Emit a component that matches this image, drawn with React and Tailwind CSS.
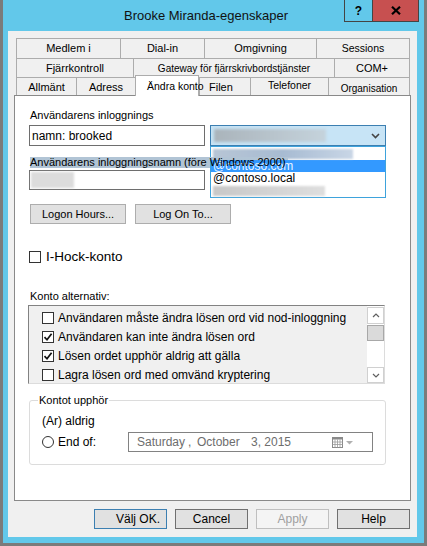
import React from "react";

const Check = () => (
  <svg width="10" height="10" viewBox="0 0 10 10">
    <path d="M1.5 5.2 L4 7.8 L8.6 1.8" fill="none" stroke="#111" strokeWidth="1.7" />
  </svg>
);

const Box = ({ checked }) => (
  <div className="w-[12px] h-[12px] border border-[#333] bg-white flex items-center justify-center shrink-0">
    {checked ? <Check /> : null}
  </div>
);

const Tab = ({ w, children, last, cls = "" }) => (
  <div
    className={`h-full border-t border-l ${last ? "border-r" : ""} border-[#acacac] bg-[#f0f0f0] flex items-center justify-center whitespace-nowrap overflow-hidden ${cls}`}
    style={{ width: w }}
  >
    {children}
  </div>
);

const Btn = ({ w, children, cls = "" }) => (
  <div
    className={`h-[20px] flex items-center justify-center border text-[12px] ${cls}`}
    style={{ width: w }}
  >
    {children}
  </div>
);

export default function App() {
  return (
    <div
      className="w-[427px] h-[546px] bg-[#7b7b7b] px-[3px] pb-[3px] flex flex-col text-black"
      style={{ fontFamily: '"Liberation Sans", Arial, sans-serif' }}
    >
      <div className="flex-1 bg-[#62c8ea] flex flex-col pl-[5px] pr-[7px] pb-[6px]">
        {/* Title bar */}
        <div className="h-[31px] relative flex items-center justify-center pr-[13px]">
          <span className="text-[13px] text-[#111]">Brooke Miranda-egenskaper</span>
          <div className="absolute top-0 -right-[2px] flex h-[22px]">
            <div className="w-[28px] h-full border-l border-b border-[#444] flex items-center justify-center text-[12px] font-bold">
              ?
            </div>
            <div className="w-[47px] h-full border-l border-r border-b border-[#444] bg-[#c75050] flex items-center justify-center">
              <svg width="10" height="9" viewBox="0 0 10 9">
                <path d="M1 0.8 L9 8.2 M9 0.8 L1 8.2" stroke="#000" strokeWidth="2.2" />
              </svg>
            </div>
          </div>
        </div>

        {/* Client */}
        <div className="flex-1 bg-[#f0f0f0] flex flex-col pt-[7px] pl-[6px]">
          {/* Tabs */}
          <div className="ml-[2px] flex flex-col text-[11px]">
            <div className="flex h-[20px]">
              <Tab w={104}>Medlem i</Tab>
              <Tab w={84}>Dial-in</Tab>
              <Tab w={112}>Omgivning</Tab>
              <Tab w={94} last cls="text-[10.5px]">Sessions</Tab>
            </div>
            <div className="flex h-[19px]">
              <Tab w={117}>Fjärrkontroll</Tab>
              <Tab w={201} cls="text-[10px]">Gateway för fjärrskrivbordstjänster</Tab>
              <Tab w={76} last>COM+</Tab>
            </div>
            <div className="flex h-[18px]">
              <Tab w={60} cls="pt-[2px]">Allmänt</Tab>
              <Tab w={59} cls="pt-[2px]">Adress</Tab>
              <div className="w-[64px] -mt-[2px] -mb-[1px] relative z-10 bg-white border-t border-l border-r border-[#acacac] flex items-center pl-[11px] whitespace-nowrap text-[10.5px] pt-[1px]">
                Ändra konto
              </div>
              <Tab w={51} cls="pt-[2px] justify-start pl-[9px]">Filen</Tab>
              <Tab w={78} cls="pb-[2px] text-[10.5px]">Telefoner</Tab>
              <Tab w={82} last cls="pt-[3px] text-[10px]">Organisation</Tab>
            </div>
          </div>

          {/* Panel */}
          <div className="w-[397px] h-[406px] bg-white border border-[#898989] flex flex-col pl-[14px]">
            <div className="mt-[13px] h-[13px] leading-[13px] text-[11px] ml-[1px]">Användarens inloggnings</div>
            <div className="mt-[3px] h-[21px] flex">
              <div className="w-[176px] h-full border border-[#6e6e6e] flex items-center pl-[2px] text-[12px]">
                namn: brooked
              </div>
              <div className="relative ml-[5px] w-[176px] h-full z-20">
                <div className="h-full border border-[#3c7fb1] bg-[#c7e4f6] flex items-center pl-[3px] pr-[5px]">
                  <div className="w-[112px] h-[13px] bg-gradient-to-r from-[#aab4bb] to-[#c5d3dc] blur-[1.5px]" />
                  <div className="flex-1" />
                  <svg width="9" height="6" viewBox="0 0 9 6">
                    <path d="M1 1 L4.5 4.5 L8 1" fill="none" stroke="#444" strokeWidth="1.6" />
                  </svg>
                </div>
                <div className="absolute top-full left-0 w-full h-[52px] bg-white border border-[#3ea3dc] flex flex-col text-[12px]">
                  <div className="h-[13px] flex items-center pl-[2px]">
                    <div className="w-[140px] h-[10px] bg-gradient-to-r from-[#b8c6d6] via-[#a7bbd2] to-[#c9d6e6] blur-[1.2px]" />
                  </div>
                  <div className="h-[12px] bg-[#3399ff] text-[#eaf4ff] leading-[13px] pl-[2px]">@contoso.com</div>
                  <div className="h-[13px] leading-[13px] pl-[2px]">@contoso.local</div>
                  <div className="h-[12px] flex items-center pl-[2px]">
                    <div className="w-[112px] h-[10px] bg-gradient-to-r from-[#c8c8c8] to-[#dedede] blur-[1.2px]" />
                  </div>
                </div>
              </div>
            </div>
            <div className="mt-[11px] h-[11px] flex ml-[1px] relative z-30">
              <span className="text-[11px] leading-[11px] pr-[2px] whitespace-nowrap [background:linear-gradient(#b1c4d5,#b1c4d5)_0_0/180px_100%_no-repeat,linear-gradient(#b1c4d5,#b1c4d5)_0_0/100%_3px_no-repeat]">
                Användarens inloggningsnamn (före Windows 2000)
              </span>
            </div>
            <div className="mt-[2px] h-[20px] w-[176px] border border-[#6e6e6e] flex items-center pl-[1px]">
              <div className="w-[43px] h-[16px] bg-[#dcdcdc] blur-[1px]" />
            </div>
            <div className="mt-[14px] flex">
              <Btn w={96} cls="ml-[1px] bg-[#e1e1e1] border-[#adadad] !text-[11px]">Logon Hours...</Btn>
              <Btn w={96} cls="ml-[9px] bg-[#e1e1e1] border-[#adadad] !text-[11px]">Log On To...</Btn>
            </div>
            <div className="mt-[25px] h-[16px] flex items-center">
              <Box />
              <span className="ml-[5px] text-[13.5px]">I-Hock-konto</span>
            </div>
            <div className="mt-[25px] h-[12px] leading-[12px] text-[11px] ml-[1px]">Konto alternativ:</div>
            <div className="mt-[3px] -ml-[1px] w-[357px] h-[79px] flex border-t border-l border-[#828282] border-r border-b border-r-[#dcdcdc] border-b-[#dcdcdc] bg-[#f0f0f0]">
              <div className="flex-1 flex flex-col pt-[2px] pl-[13px] overflow-hidden text-[12px]">
                {[
                  [false, "Användaren måste ändra lösen ord vid nod-inloggning"],
                  [true, "Användaren kan inte ändra lösen ord"],
                  [true, "Lösen ordet upphör aldrig att gälla"],
                  [false, "Lagra lösen ord med omvänd kryptering"],
                ].map(([c, t], i) => (
                  <div key={i} className="h-[19px] flex items-center shrink-0 whitespace-nowrap">
                    <Box checked={c} />
                    <span className="ml-[4px]">{t}</span>
                  </div>
                ))}
              </div>
              <div className="w-[17px] bg-white flex flex-col">
                <div className="mt-[1px] h-[17px] border border-[#d0d0d0] flex items-center justify-center">
                  <svg width="8" height="5" viewBox="0 0 8 5">
                    <path d="M1 4 L4 1 L7 4" fill="none" stroke="#606060" strokeWidth="1.2" />
                  </svg>
                </div>
                <div className="mt-[1px] h-[16px] bg-[#dadada] border border-[#a8a8a8]" />
                <div className="flex-1" />
                <div className="h-[16px] border border-[#d0d0d0] flex items-center justify-center">
                  <svg width="8" height="5" viewBox="0 0 8 5">
                    <path d="M1 1 L4 4 L7 1" fill="none" stroke="#606060" strokeWidth="1.2" />
                  </svg>
                </div>
              </div>
            </div>

            <div className="mt-[16px] w-[357px] h-[65px] border border-[#dcdcdc] rounded-[3px] relative flex flex-col pl-[12px] pt-[13px]">
              <span className="absolute -top-[7px] left-[8px] bg-white px-[1px] text-[11px] leading-[12px]">Kontot upphör</span>
              <div className="h-[14px] leading-[14px] text-[12px]">(Ar) aldrig</div>
              <div className="mt-[4px] h-[20px] flex items-center">
                <div className="w-[86px] flex items-center">
                  <div className="w-[12px] h-[12px] rounded-full border border-[#333] bg-white" />
                  <span className="ml-[4px] text-[12px]">End of:</span>
                </div>
                <div className="w-[245px] h-[20px] border border-[#828282] flex items-center pl-[8px] text-[12px] text-[#6d6d6d] whitespace-nowrap">
                  <span className="w-[51px]">Saturday</span>
                  <span className="w-[9px]">,</span>
                  <span className="w-[54px]">October</span>
                  <span className="w-[81px]">3, 2015</span>
                  <svg width="11" height="11" viewBox="0 0 11 11">
                    <rect x="0.5" y="0.5" width="10" height="10" fill="#fff" stroke="#8a8a8a" />
                    <rect x="0.5" y="0.5" width="10" height="2" fill="#8a8a8a" />
                    <path d="M0.5 5 H10.5 M0.5 7.5 H10.5 M3 2.5 V10.5 M5.5 2.5 V10.5 M8 2.5 V10.5" stroke="#9a9a9a" strokeWidth="0.8" />
                  </svg>
                  <svg width="9" height="5" viewBox="0 0 9 5" className="ml-[2px]">
                    <path d="M1 1 L8 1 L4.5 4.5 Z" fill="#b0b0b0" />
                  </svg>
                </div>
              </div>
            </div>
          </div>

          {/* Bottom buttons */}
          <div className="mt-[8px] flex justify-end pr-[7px] gap-[8px]">
            <Btn w={73} cls="bg-[#e1e1e1] border-[#3c7fb1] justify-end pr-[6px]">Välj OK.</Btn>
            <Btn w={73} cls="bg-[#e1e1e1] border-[#707070]">Cancel</Btn>
            <Btn w={73} cls="bg-[#f4f4f4] border-[#bfbfbf] text-[#a0a0a0]">Apply</Btn>
            <Btn w={73} cls="bg-[#e1e1e1] border-[#707070]">Help</Btn>
          </div>
        </div>
      </div>
    </div>
  );
}
